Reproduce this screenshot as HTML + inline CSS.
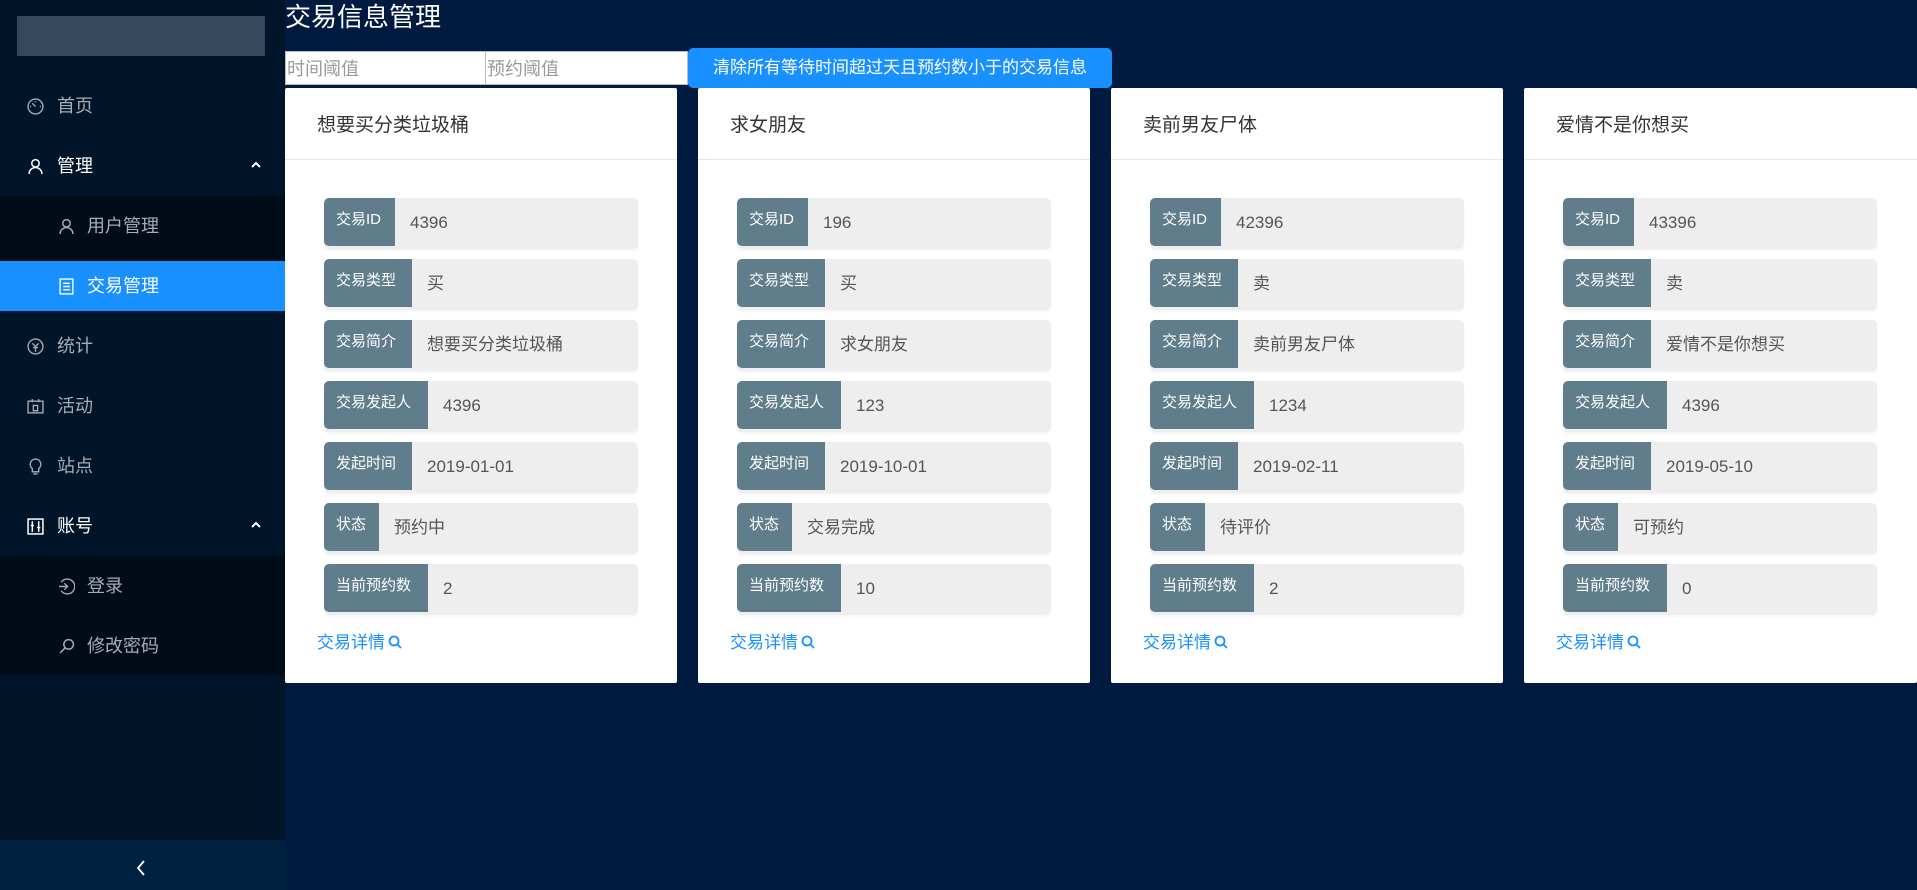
<!DOCTYPE html>
<html><head><meta charset="utf-8"><style>
*{box-sizing:border-box;margin:0;padding:0}
body{width:1917px;height:890px;background:#001a40;font-family:"Liberation Sans","Noto Sans CJK SC",sans-serif;position:relative;overflow:hidden}
.side{position:absolute;left:0;top:0;width:285px;height:890px;background:#001529}
.logo{position:absolute;left:17px;top:16px;width:248px;height:40px;background:#35475a}
.mi{position:absolute;left:0;width:285px;height:50px;color:#a6adb4;font-size:18px;line-height:50px}
.mi .ic{position:absolute;left:27px;top:17px;width:17px;height:17px}
.mi .t{position:absolute;left:57px}
.mi.sub .ic{left:58px}
.mi.sub .t{left:87px}
.mi.w{color:#fff}
.sel{background:#1890ff;color:#fff}
.arr{position:absolute;left:251px;top:20px;width:10px;height:8px}
.subbg{position:absolute;left:0;width:285px;background:#000c17}
.coll{position:absolute;left:0;top:840px;width:285px;height:50px;background:#002140}
h1{position:absolute;left:285px;top:0;color:#fff;font-size:26px;font-weight:normal;line-height:34px}
.inp{position:absolute;top:51px;height:34px;background:#fff;border:1px solid #bbb;color:#999;font-size:18px;line-height:34px;padding-left:1px}
.btn{position:absolute;left:688px;top:48px;width:424px;height:40px;background:#1890ff;border-radius:5px;color:#fff;font-size:17px;line-height:40px;text-align:center}
.card{position:absolute;top:88px;width:392px;height:595px;background:#fff;border-radius:2px}
.ch{height:72px;border-bottom:1px solid #e8e8e8;font-size:19px;color:#333;line-height:76px;padding-left:32px}
.row{position:absolute;left:39px;width:314px;height:51px;background:#eee;border-radius:5px;box-shadow:0 2px 2px rgba(0,0,0,.04)}
.lb{position:absolute;left:0;top:0;height:48px;background:#607d8b;color:#fff;font-size:15px;padding:10px 0 0 12px;border-radius:5px 0 0 5px}
.v{position:absolute;top:1px;line-height:48px;font-size:17px;color:#555}
.lk{position:absolute;left:32px;top:540px;color:#1890ff;font-size:17px}
.lk svg{width:14px;height:14px;vertical-align:-1px;margin-left:3px}
</style></head><body>
<div class="side">
<div class="logo"></div>
<div class="subbg" style="top:196px;height:114px"></div>
<div class="subbg" style="top:556px;height:119px"></div>
<div class="mi" style="top:81px"><svg class="ic" viewBox="0 0 16 16" fill="none" stroke="#a6adb4" stroke-width="1.3"><circle cx="8" cy="8" r="7"/><path d="M8 8 5 5M3 8h1M12 8h1M8 3v1"/></svg><span class="t">首页</span></div>
<div class="mi w" style="top:141px"><svg class="ic" viewBox="0 0 16 16" fill="none" stroke="#fff" stroke-width="1.4"><circle cx="8" cy="5" r="3.5"/><path d="M2 15c0-4 3-6 6-6s6 2 6 6"/></svg><span class="t">管理</span><svg class="arr" viewBox="0 0 10 8" fill="none" stroke="#fff" stroke-width="2"><path d="M1 6l4-4 4 4"/></svg></div>
<div class="mi sub" style="top:201px"><svg class="ic" viewBox="0 0 16 16" fill="none" stroke="#a6adb4" stroke-width="1.4"><circle cx="8" cy="5" r="3.5"/><path d="M2 15c0-4 3-6 6-6s6 2 6 6"/></svg><span class="t">用户管理</span></div>
<div class="mi sub sel" style="top:261px"><svg class="ic" viewBox="0 0 16 16" fill="none" stroke="#fff" stroke-width="1.3"><rect x="2" y="1" width="12" height="14"/><path d="M5 5h6M5 8h6M5 11h6"/></svg><span class="t">交易管理</span></div>
<div class="mi" style="top:321px"><svg class="ic" viewBox="0 0 16 16" fill="none" stroke="#a6adb4" stroke-width="1.3"><circle cx="8" cy="8" r="7"/><path d="M5 5l3 3 3-3M8 8v5M5.5 9h5"/></svg><span class="t">统计</span></div>
<div class="mi" style="top:381px"><svg class="ic" viewBox="0 0 16 16" fill="none" stroke="#a6adb4" stroke-width="1.3"><rect x="1" y="3" width="14" height="11"/><path d="M5 1v3M11 1v3M6 7h4v5H6z"/></svg><span class="t">活动</span></div>
<div class="mi" style="top:441px"><svg class="ic" viewBox="0 0 16 16" fill="none" stroke="#a6adb4" stroke-width="1.3"><path d="M8 1a5 5 0 0 0-3 9v3h6v-3a5 5 0 0 0-3-9zM6 15h4"/></svg><span class="t">站点</span></div>
<div class="mi w" style="top:501px"><svg class="ic" viewBox="0 0 16 16" fill="none" stroke="#fff" stroke-width="1.4"><rect x="1" y="1" width="14" height="14"/><path d="M5 3v10M11 3v10M3.5 7h3M9.5 9h3"/></svg><span class="t">账号</span><svg class="arr" viewBox="0 0 10 8" fill="none" stroke="#fff" stroke-width="2"><path d="M1 6l4-4 4 4"/></svg></div>
<div class="mi sub" style="top:561px"><svg class="ic" viewBox="0 0 16 16" fill="none" stroke="#a6adb4" stroke-width="1.3"><path d="M3 4a7 7 0 1 1 0 8M1 8h8M6 5l3 3-3 3"/></svg><span class="t">登录</span></div>
<div class="mi sub" style="top:621px"><svg class="ic" viewBox="0 0 16 16" fill="none" stroke="#a6adb4" stroke-width="1.4"><circle cx="10" cy="6" r="4.5"/><path d="M7 9l-5 5"/></svg><span class="t">修改密码</span></div>
<div class="coll"><svg style="position:absolute;left:136px;top:861px;top:20px;width:10px;height:16px" viewBox="0 0 10 16" fill="none" stroke="#fff" stroke-width="1.8"><path d="M8 1 2 8l6 7"/></svg></div>
</div>
<h1>交易信息管理</h1>
<div class="inp" style="left:285px;width:201px">时间阈值</div>
<div class="inp" style="left:485px;width:203px">预约阈值</div>
<div class="btn">清除所有等待时间超过天且预约数小于的交易信息</div>

<div class="card" style="left:285px"><div class="ch">想要买分类垃圾桶</div>
<div class="row" style="top:110px"><div class="lb" style="width:71px">交易ID</div><div class="v" style="left:86px">4396</div></div>
<div class="row" style="top:171px"><div class="lb" style="width:88px">交易类型</div><div class="v" style="left:103px">买</div></div>
<div class="row" style="top:232px"><div class="lb" style="width:88px">交易简介</div><div class="v" style="left:103px">想要买分类垃圾桶</div></div>
<div class="row" style="top:293px"><div class="lb" style="width:104px">交易发起人</div><div class="v" style="left:119px">4396</div></div>
<div class="row" style="top:354px"><div class="lb" style="width:88px">发起时间</div><div class="v" style="left:103px">2019-01-01</div></div>
<div class="row" style="top:415px"><div class="lb" style="width:55px">状态</div><div class="v" style="left:70px">预约中</div></div>
<div class="row" style="top:476px"><div class="lb" style="width:104px">当前预约数</div><div class="v" style="left:119px">2</div></div>
<div class="lk">交易详情<svg viewBox="0 0 14 14" fill="none" stroke="#1890ff" stroke-width="1.8"><circle cx="6" cy="6" r="4.5"/><path d="M9.5 9.5 13 13"/></svg></div></div>

<div class="card" style="left:698px"><div class="ch">求女朋友</div>
<div class="row" style="top:110px"><div class="lb" style="width:71px">交易ID</div><div class="v" style="left:86px">196</div></div>
<div class="row" style="top:171px"><div class="lb" style="width:88px">交易类型</div><div class="v" style="left:103px">买</div></div>
<div class="row" style="top:232px"><div class="lb" style="width:88px">交易简介</div><div class="v" style="left:103px">求女朋友</div></div>
<div class="row" style="top:293px"><div class="lb" style="width:104px">交易发起人</div><div class="v" style="left:119px">123</div></div>
<div class="row" style="top:354px"><div class="lb" style="width:88px">发起时间</div><div class="v" style="left:103px">2019-10-01</div></div>
<div class="row" style="top:415px"><div class="lb" style="width:55px">状态</div><div class="v" style="left:70px">交易完成</div></div>
<div class="row" style="top:476px"><div class="lb" style="width:104px">当前预约数</div><div class="v" style="left:119px">10</div></div>
<div class="lk">交易详情<svg viewBox="0 0 14 14" fill="none" stroke="#1890ff" stroke-width="1.8"><circle cx="6" cy="6" r="4.5"/><path d="M9.5 9.5 13 13"/></svg></div></div>

<div class="card" style="left:1111px"><div class="ch">卖前男友尸体</div>
<div class="row" style="top:110px"><div class="lb" style="width:71px">交易ID</div><div class="v" style="left:86px">42396</div></div>
<div class="row" style="top:171px"><div class="lb" style="width:88px">交易类型</div><div class="v" style="left:103px">卖</div></div>
<div class="row" style="top:232px"><div class="lb" style="width:88px">交易简介</div><div class="v" style="left:103px">卖前男友尸体</div></div>
<div class="row" style="top:293px"><div class="lb" style="width:104px">交易发起人</div><div class="v" style="left:119px">1234</div></div>
<div class="row" style="top:354px"><div class="lb" style="width:88px">发起时间</div><div class="v" style="left:103px">2019-02-11</div></div>
<div class="row" style="top:415px"><div class="lb" style="width:55px">状态</div><div class="v" style="left:70px">待评价</div></div>
<div class="row" style="top:476px"><div class="lb" style="width:104px">当前预约数</div><div class="v" style="left:119px">2</div></div>
<div class="lk">交易详情<svg viewBox="0 0 14 14" fill="none" stroke="#1890ff" stroke-width="1.8"><circle cx="6" cy="6" r="4.5"/><path d="M9.5 9.5 13 13"/></svg></div></div>

<div class="card" style="left:1524px;width:393px"><div class="ch">爱情不是你想买</div>
<div class="row" style="top:110px"><div class="lb" style="width:71px">交易ID</div><div class="v" style="left:86px">43396</div></div>
<div class="row" style="top:171px"><div class="lb" style="width:88px">交易类型</div><div class="v" style="left:103px">卖</div></div>
<div class="row" style="top:232px"><div class="lb" style="width:88px">交易简介</div><div class="v" style="left:103px">爱情不是你想买</div></div>
<div class="row" style="top:293px"><div class="lb" style="width:104px">交易发起人</div><div class="v" style="left:119px">4396</div></div>
<div class="row" style="top:354px"><div class="lb" style="width:88px">发起时间</div><div class="v" style="left:103px">2019-05-10</div></div>
<div class="row" style="top:415px"><div class="lb" style="width:55px">状态</div><div class="v" style="left:70px">可预约</div></div>
<div class="row" style="top:476px"><div class="lb" style="width:104px">当前预约数</div><div class="v" style="left:119px">0</div></div>
<div class="lk">交易详情<svg viewBox="0 0 14 14" fill="none" stroke="#1890ff" stroke-width="1.8"><circle cx="6" cy="6" r="4.5"/><path d="M9.5 9.5 13 13"/></svg></div></div>
</body></html>
